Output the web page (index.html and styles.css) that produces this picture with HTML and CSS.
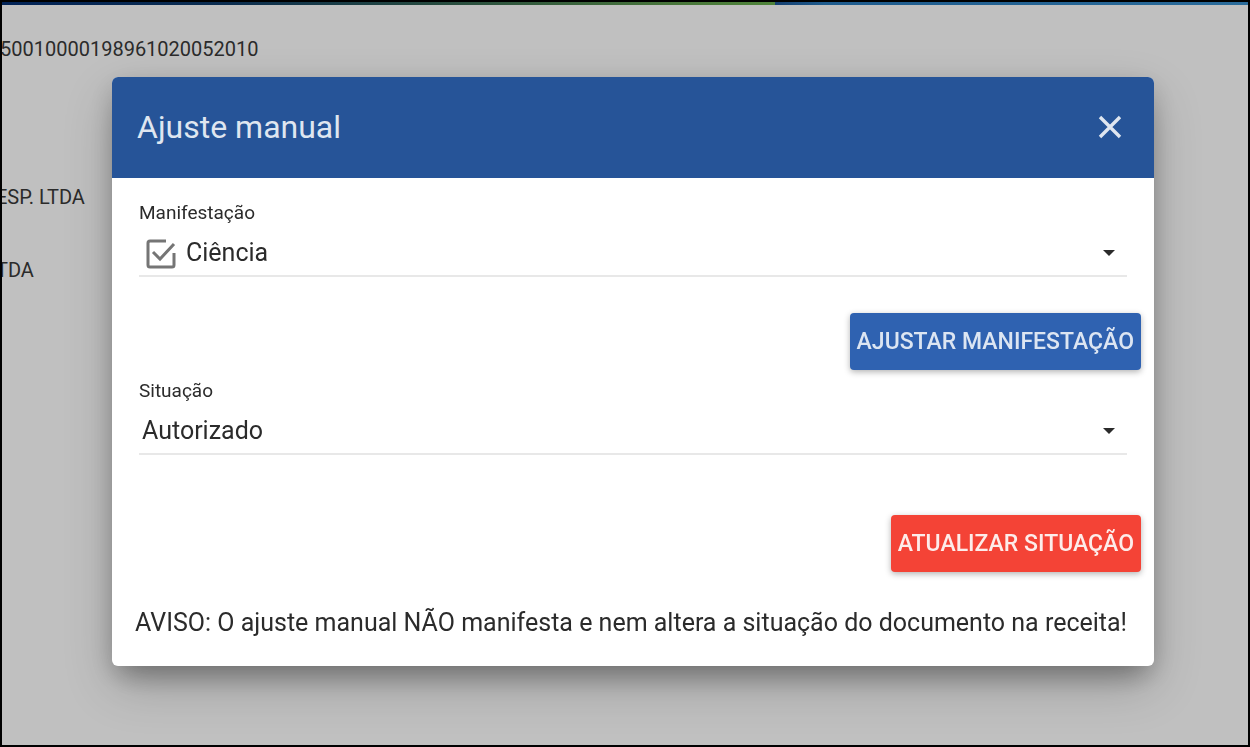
FILE: index.html
```
<!DOCTYPE html>
<html lang="pt-BR">
<head>
    <meta charset="UTF-8">
    <meta name="viewport" content="width=device-width, initial-scale=1.0">
    <title>Ajuste manual</title>
    <link rel="stylesheet" href="styles.css">
</head>
<body>
    <div class="page">
        <div class="top-strip"></div>
        <div class="document">
            <p class="document-key">50010000198961020052010</p>
            <p class="document-name">ESP. LTDA</p>
            <p class="document-name">TDA</p>
        </div>
    </div>

    <div class="overlay">
        <div class="dialog" role="dialog" aria-labelledby="dialogTitle">
            <header class="dialog-header">
                <h1 class="dialog-title" id="dialogTitle">Ajuste manual</h1>
                <button class="close" type="button" aria-label="Fechar">
                    <svg viewBox="0 0 24 24" width="24" height="24"><path d="M2 2L22 22M22 2L2 22" fill="none" stroke="currentColor" stroke-width="3.4"/></svg>
                </button>
            </header>

            <form class="dialog-body">
                <div class="field">
                    <label for="manifestacao">Manifestação</label>
                    <div class="field-row">
                        <svg class="check" viewBox="0 0 30 30" width="30" height="30">
                            <path d="M20 2H4Q2 2 2 4V26Q2 28 4 28H26Q28 28 28 26V14" fill="none" stroke="currentColor" stroke-width="3"/>
                            <path d="M7 13L14 20L28 5" fill="none" stroke="currentColor" stroke-width="3"/>
                        </svg>
                        <select id="manifestacao">
                            <option>Ciência</option>
                        </select>
                        <svg class="caret" viewBox="0 0 12 6" width="12" height="6"><path d="M0 0H12L6 6Z" fill="currentColor"/></svg>
                    </div>
                </div>
                <div class="actions">
                    <button class="btn btn-primary" type="button">AJUSTAR MANIFESTAÇÃO</button>
                </div>

                <div class="field">
                    <label for="situacao">Situação</label>
                    <div class="field-row">
                        <select id="situacao">
                            <option>Autorizado</option>
                        </select>
                        <svg class="caret" viewBox="0 0 12 6" width="12" height="6"><path d="M0 0H12L6 6Z" fill="currentColor"/></svg>
                    </div>
                </div>
                <div class="actions actions-last">
                    <button class="btn btn-warn" type="button">ATUALIZAR SITUAÇÃO</button>
                </div>

                <p class="notice">AVISO: O ajuste manual NÃO manifesta e nem altera a situação do documento na receita!</p>
            </form>
        </div>
    </div>
</body>
</html>
```

FILE: styles.css
```
* {
    box-sizing: border-box;
}
body {
    margin: 0;
    font-family: Roboto, sans-serif;
    color: #2b2b2b;
    background-color: #c0c0c0;
}
p, h1 {
    margin: 0;
}
.page {
    height: 100vh;
    border: 2px solid #000;
    overflow: hidden;
}
.top-strip {
    height: 3px;
    background: linear-gradient(to right, #022357 0%, #0b2d50 18%, #24483f 34%, #48753a 54%, #4f843a 62%, #153f70 62%, #1e5b8d 66%, #2a6b9a 100%);
}

/* Dados do documento atrás do diálogo */
.document {
    display: flex;
    flex-direction: column;
    margin-left: -2px;
    padding-top: 32px;
    font-size: 20px;
    line-height: 24px;
    white-space: nowrap;
}
.document-key {
    margin-bottom: 124px;
}
.document-name {
    margin: 0 0 49px -4px;
}

/* Diálogo */
.overlay {
    position: fixed;
    inset: 0;
    padding: 77px 96px 81px 112px;
}
.dialog {
    border-radius: 6px;
    overflow: hidden;
    background-color: #fff;
    box-shadow: 0 20px 26px -12px rgba(0, 0, 0, .2), 0 20px 50px 0 rgba(0, 0, 0, .2), 0 8px 26px rgba(0, 0, 0, .16);
}
.dialog-header {
    display: flex;
    align-items: center;
    justify-content: space-between;
    height: 101px;
    padding: 0 32px 2px 25px;
    background-color: #265498;
    color: #dfe6f0;
}
.dialog-title {
    font-size: 32px;
    font-weight: 400;
}
.close {
    display: flex;
    padding: 0;
    border: 0;
    background: none;
    color: inherit;
}
.dialog-body {
    padding: 23px 13px 27px;
}
.field {
    margin: 0 14px;
}
.field label {
    display: block;
    font-size: 19px;
    line-height: 24px;
}
.field-row {
    display: flex;
    align-items: center;
    height: 52px;
    padding: 6px 12px 0 3px;
    border-bottom: 2px solid #e8e8e8;
}
.field-row select {
    flex: 1;
    padding: 0;
    border: 0;
    appearance: none;
    background: none;
    color: inherit;
    font-family: inherit;
    font-size: 25px;
    line-height: 32px;
}
.check {
    margin: 2px 10px 0 4px;
    color: #757575;
}
.actions {
    display: flex;
    justify-content: flex-end;
    padding: 36px 0 9px;
}
.actions-last {
    padding: 60px 0 35px;
}
.btn {
    height: 57px;
    padding: 0 7px;
    border: 0;
    border-radius: 4px;
    font-family: inherit;
    font-size: 23px;
    font-weight: 500;
    box-shadow: 0 2px 6px rgba(0, 0, 0, .3);
}
.btn-primary {
    background-color: #2f62b1;
    color: #dce5f2;
}
.btn-warn {
    background-color: #f44336;
    color: #fdecea;
}
.notice {
    padding: 0 10px;
    font-size: 25px;
    line-height: 32px;
}
```
